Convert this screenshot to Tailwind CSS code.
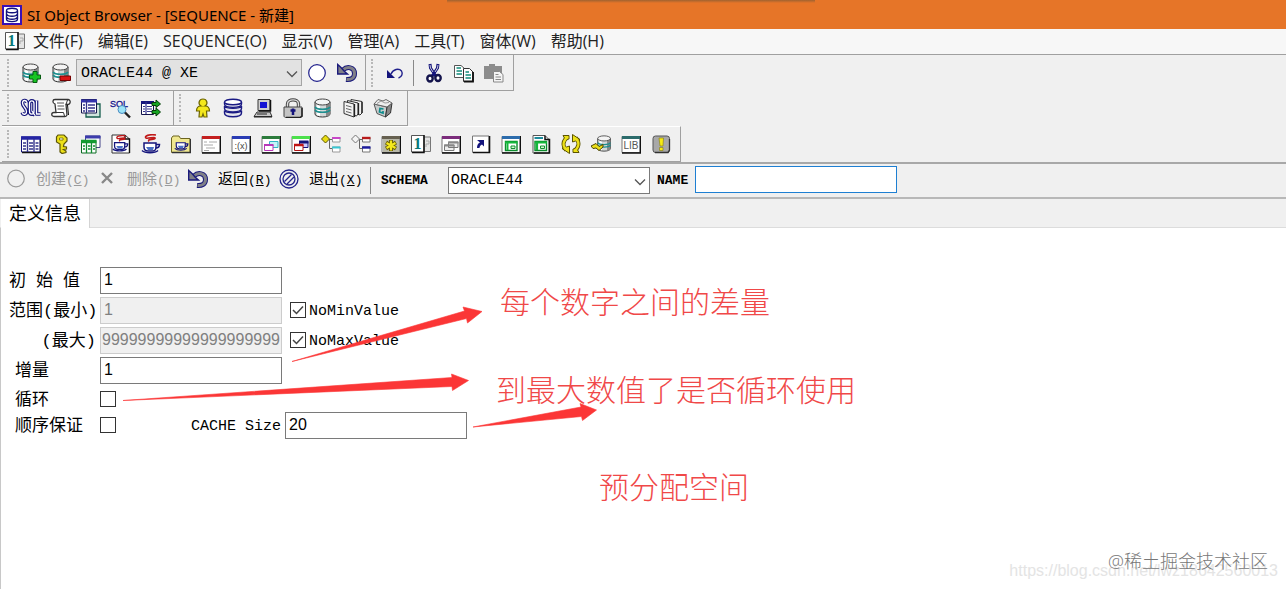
<!DOCTYPE html>
<html lang="zh-Hans">
<head>
    <meta charset="UTF-8">
    <meta name="viewport" content="width=device-width, initial-scale=1.0">
    <title>SI Object Browser - [SEQUENCE - 新建]</title>
    <script src="https://cdn.jsdelivr.net/npm/@tailwindcss/browser@4"></script>
    <style>
        body { font-family: 'Open Sans', 'Noto Sans CJK SC', sans-serif; }
        .caption { font-family: 'Noto Sans', 'Noto Sans CJK SC', sans-serif; }
        .song { font-family: 'Liberation Mono', 'Noto Sans CJK SC', monospace; }
        .digits { font-family: 'Liberation Sans', 'Noto Sans CJK SC', sans-serif; }
    </style>
</head>
<body class="min-h-screen flex flex-col bg-white text-black overflow-hidden">

    <!-- 共用图形 -->
    <svg class="hidden">
        <symbol id="win" viewBox="0 0 20 20">
            <path d="M1 2.500H19V18.500H1z" fill="#fff" stroke="#777"/>
            <path d="M19.500 2V19H1" fill="none" stroke="#111" stroke-width="1.500"/>
            <path d="M1 3.500H19" stroke="currentColor" stroke-width="3"/>
        </symbol>
        <symbol id="back" viewBox="0 0 20 20">
            <path d="M6 7C10 3 17.500 4 17.500 10.500C17.500 15 14 17 9 16.500" fill="none" stroke="#1a1a7c" stroke-width="5"/>
            <path d="M6 7C10 3 17.500 4 17.500 10.500C17.500 15 14 17 9.500 16.500" fill="none" stroke="#808088" stroke-width="3"/>
            <path d="M.7 1.500V11H10.500L7.500 8.500L4 4.500z" fill="#808088" stroke="#1a1a7c" stroke-width="1.400"/>
        </symbol>
        <symbol id="db" viewBox="0 0 20 20">
            <path d="M2 4V16C2 20 17 20 17 16V4" fill="#d4d8d8" stroke="#333"/>
            <path d="M13 6H17V16C17 17 15 18.500 13 18.500z" fill="#888"/>
            <path d="M4 7V17L7 18V8z" fill="#fff"/>
            <ellipse cx="9.500" cy="4" rx="7.500" ry="3" fill="#f4f4f4" stroke="#444"/>
            <path d="M2 9C4 12 15 12 17 9M2 12C4 15 15 15 17 12" fill="none" stroke="#1d8f8f" stroke-width="1.500"/>
        </symbol>
        <symbol id="cup" viewBox="0 0 20 20">
            <path d="M3 9H15V13C15 16 13 17 12 17H7C4 17 3 15 3 13z" fill="#fff" stroke="#15157c" stroke-width="1.500"/>
            <path d="M5 13H13L12 16H7z" fill="#4b70c4"/>
            <path d="M15 10.500H18.500C18.500 13 17 14 14.500 14M1 16.500C4 19.500 14 19.500 17 16.500" fill="none" stroke="#15157c" stroke-width="1.500"/>
        </symbol>
        <symbol id="steam" viewBox="0 0 20 20">
            <path d="M15 1C8 0 3 2 5 4C7 5 15 2 14 4.500C13 6 6 4.500 8 7.500" fill="none" stroke="#c01818" stroke-width="1.600"/>
        </symbol>
        <symbol id="book" viewBox="0 0 20 20">
            <path d="M12 3H19.500V17.500H12z" fill="#e4e4e4" stroke="#777"/>
            <path d="M15 7H18V10H15V13" fill="none" stroke="#aaa"/>
            <path d="M.5 1.500H13V18H.5z" fill="#fff" stroke="#555"/>
            <path d="M13 1V18.500H1" fill="none" stroke="#111" stroke-width="1.500"/>
            <text x="6.500" y="15" text-anchor="middle" font-family="Liberation Serif" font-weight="bold" font-size="16" fill="#087878">1</text>
        </symbol>
    </svg>

    <header class="relative flex items-center h-[29px] pl-[2px] gap-[5px] bg-[#e67528]">
        <svg class="size-5" viewBox="0 0 20 20">
            <path d="M1 1H19V19H1z" fill="#fff" stroke="#3a10b4" stroke-width="2"/>
            <path d="M4.500 6V14C4.500 17.500 15.500 17.500 15.500 14V6M4.500 9C6 12 14 12 15.500 9M4.500 12C6 15 14 15 15.500 12" fill="none" stroke="#14147c" stroke-width="1.400"/>
            <ellipse cx="10" cy="5.500" rx="5.500" ry="2.200" fill="#fff" stroke="#14147c" stroke-width="1.400"/>
        </svg>
        <h1 class="caption text-[15px] leading-5">SI Object Browser - [SEQUENCE - 新建]</h1>
        <div class="absolute left-[447px] top-0 w-[368px] h-[3px] bg-linear-to-b from-[#a0622f] to-[#e67528]"></div>
    </header>

    <nav class="flex items-center h-[26px] pl-[5px] pb-[2px] bg-[#f7f7f7] border-b border-[#a0a0a0] text-base leading-5 text-[#222]">
        <svg class="size-5 mr-2"><use href="#book"/></svg>
        <div class="flex gap-[15px]">
            <button>文件(F)</button>
            <button>编辑(E)</button>
            <button>SEQUENCE(O)</button>
            <button>显示(V)</button>
            <button>管理(A)</button>
            <button>工具(T)</button>
            <button>窗体(W)</button>
            <button>帮助(H)</button>
        </div>
    </nav>

    <div class="bg-[#f0f0f0] border-b-2 border-[#a8a8a8] pl-[2px]">
        <!-- 第一行 -->
        <div class="flex h-9">
            <div class="flex items-center border-r border-b border-[#a0a0a0] w-[364px] pl-[5px]">
                <div class="h-7 w-[9px] border-l-2 border-dotted border-[#b8b8b8]"></div>
                <button class="w-[30px] grid place-items-center" aria-label="连接">
                    <svg class="size-5" viewBox="0 0 20 20"><use href="#db"/><path d="M12 8.500H16V12H19.500V16H16V19.500H12V16H8.500V12H12z" fill="#16c422" stroke="#065c10"/></svg>
                </button>
                <button class="w-[30px] grid place-items-center" aria-label="断开">
                    <svg class="size-5" viewBox="0 0 20 20"><use href="#db"/><path d="M9 13H19.500V17.500H9z" fill="#d81414" stroke="#700"/></svg>
                </button>
                <div class="relative">
                    <select aria-label="数据库" class="song appearance-none block w-[226px] h-[27px] pl-1 pt-[3px] bg-[#e2e2e2] border border-[#a5a5a5] text-[15px]"><option>ORACLE44 @ XE</option></select>
                    <svg class="absolute right-1 top-[11px] w-3 h-2 pointer-events-none" viewBox="0 0 12 8"><path d="M1 1.500L6 6.500L11 1.500" fill="none" stroke="#555" stroke-width="1.300"/></svg>
                </div>
                <button class="w-[30px] grid place-items-center" aria-label="执行">
                    <svg class="size-5" viewBox="0 0 20 20"><circle cx="10" cy="10" r="8.300" fill="#fff" stroke="#20208c" stroke-width="1.200"/></svg>
                </button>
                <button class="w-[30px] grid place-items-center" aria-label="返回"><svg class="size-5"><use href="#back"/></svg></button>
            </div>
            <div class="flex items-center border-r border-b border-[#a0a0a0] w-[148px] pl-[5px]">
                <div class="h-7 w-[9px] border-l-2 border-dotted border-[#b8b8b8]"></div>
                <button class="w-[30px] grid place-items-center" aria-label="撤销">
                    <svg class="size-5" viewBox="0 0 20 20"><path d="M6 11C8 6 14 5 16.500 8C18 10.500 17 14 13.500 15" fill="none" stroke="#20208c" stroke-width="1.400"/><path d="M2 7V15H10z" fill="#14147c"/></svg>
                </button>
                <div class="w-px h-[26px] bg-[#888] ml-[3px] mr-[5px]"></div>
                <button class="w-[30px] grid place-items-center" aria-label="剪切">
                    <svg class="size-5" viewBox="0 0 20 20"><path d="M6 1L6.500 5L12.500 14M14 1L13.500 5L7.500 14" fill="none" stroke="#14147c" stroke-width="3"/><path d="M6 2L6.500 5L9 9M14 2L13.500 5L11 9" fill="none" stroke="#ccd" stroke-width="1"/><ellipse cx="6" cy="15.500" rx="2.700" ry="3" fill="#fff" stroke="#14144c" stroke-width="2.400"/><ellipse cx="14" cy="15" rx="2.700" ry="3" fill="#fff" stroke="#14144c" stroke-width="2.400"/></svg>
                </button>
                <button class="w-[30px] grid place-items-center" aria-label="复制">
                    <svg class="size-5" viewBox="0 0 20 20"><path d="M.5 2.500H7L10.500 5.500V14.500H.5z" fill="#fff" stroke="#555"/><path d="M2.500 5H7M2.500 8H8M2.500 11H8" stroke="#128a7a" stroke-width="1.400"/><path d="M9.500 5.500H15.500L19 9V18.500H9.500z" fill="#fff" stroke="#333"/><path d="M19 9V18.500H10" fill="none" stroke="#111" stroke-width="1.800"/><path d="M11.500 9H15M11.500 12H17M11.500 15H17" stroke="#128a7a" stroke-width="1.400"/></svg>
                </button>
                <button class="w-[30px] grid place-items-center" aria-label="粘贴">
                    <svg class="size-5" viewBox="0 0 20 20"><path d="M0 3H5V1H11V3H18V16H0z" fill="#8c8c8c"/><path d="M9.500 8.500H15.500L19 11.500V19H9.500z" fill="#f4f4f4" stroke="#888"/><path d="M11.500 11.500H14.500M11.500 14H17M11.500 16.500H17" stroke="#888"/></svg>
                </button>
            </div>
        </div>

        <!-- 第二行 -->
        <div class="flex h-[35px]">
            <div class="flex items-center border-r border-b border-[#a0a0a0] w-[172px] pl-[5px]">
                <div class="h-7 w-[9px] border-l-2 border-dotted border-[#b8b8b8]"></div>
                <button class="w-[30px] grid place-items-center" aria-label="SQL">
                    <svg class="size-5 overflow-visible" viewBox="0 0 20 20"><g fill="none" stroke-linejoin="round"><path d="M6 4.500C5 1.500 1.500 2 1.500 5C1.500 9 5.500 9.500 5.500 13.500C5.500 17 2 17 1.200 14.500M8.500 5.500C8.500 2 13 2 13 5.500V13.500C13 17 8.500 17 8.500 13.500zM11 13L14 17.500M15.500 2.500V16H19.500" stroke="#14147c" stroke-width="3.600"/><path d="M6 4.500C5 1.500 1.500 2 1.500 5C1.500 9 5.500 9.500 5.500 13.500C5.500 17 2 17 1.200 14.500M8.500 5.500C8.500 2 13 2 13 5.500V13.500C13 17 8.500 17 8.500 13.500zM11 13L14 17.500M15.500 2.500V16H19.500" stroke="#fff" stroke-width="1.300"/></g></svg>
                </button>
                <button class="w-[30px] grid place-items-center" aria-label="脚本">
                    <svg class="size-5" viewBox="0 0 20 20"><path d="M4 1.500H17C20 1.500 20 6.500 16.500 6.500H15L16 17C15 19 14 18.500 13 18.500H3C0 18.500 0 14.500 3 14.500H5L4 6C1 5 1.500 1.500 4 1.500z" fill="#fff" stroke="#333" stroke-width="1.300"/><path d="M15 6.500L16.500 2M5 14.500H12.500L13.500 18" fill="none" stroke="#333"/><path d="M6 5H13M6.500 8H13M6.500 11H13.500" stroke="#555"/><path d="M16.500 7L17.500 17" stroke="#111"/></svg>
                </button>
                <button class="w-[30px] grid place-items-center" aria-label="表数据">
                    <svg class="size-5" viewBox="0 0 20 20"><path d="M5 6H19V19H5z" fill="#cfe4dc" stroke="#145c4c" stroke-width="1.300"/><path d="M.5 1.500H15.500V15H.5z" fill="#fff" stroke="#14144c"/><path d="M0 3H16" stroke="#3434ac" stroke-width="3"/><path d="M5.500 2V15M2 7H4M2 10H4M2 13H4M7 7H14M7 10H14M7 13H14" stroke="#33338c" stroke-width="1.300"/></svg>
                </button>
                <button class="w-[30px] grid place-items-center" aria-label="SQL 搜索">
                    <svg class="size-5 overflow-visible" viewBox="0 0 20 20"><text x="8" y="9" text-anchor="middle" font-family="Liberation Sans" font-size="9" fill="#14148c" stroke="#14148c" stroke-width=".3">SQL</text><circle cx="11" cy="11.500" r="4" fill="#9ce4f8" stroke="#4a8ac0"/><path d="M14 14.500L19 19.500" stroke="#222" stroke-width="2.400"/></svg>
                </button>
                <button class="w-[30px] grid place-items-center" aria-label="导出">
                    <svg class="size-5" viewBox="0 0 20 20"><path d="M.5 3.500H12.500V16.500H.5z" fill="#fff" stroke="#14144c"/><path d="M0 4.500H13" stroke="#14147c" stroke-width="3"/><path d="M5 4V16M2 8.500H4M2 11H4M2 13.500H4M6 8.500H11M6 11H11M6 13.500H11" stroke="#33338c" stroke-width="1.200"/><path d="M11 4.500H15V2L19.500 6L15 9.500V7.500H11zM11 12.500H15V10L19.500 14L15 18V15.500H11z" fill="#16a422" stroke="#053c08"/></svg>
                </button>
            </div>
            <div class="flex items-center border-r border-b border-[#a0a0a0] w-[234px] pl-[5px]">
                <div class="h-7 w-[9px] border-l-2 border-dotted border-[#b8b8b8]"></div>
                <button class="w-[30px] grid place-items-center" aria-label="用户">
                    <svg class="size-5" viewBox="0 0 20 20"><path d="M8 8C4.500 6 6 1 10 1S15.500 6 12 8C15 8 16.500 9 16.500 13H13.500L14 19H11L10 16L9 19H6L6.500 13H3.500C3.500 9 5 8 8 8z" fill="#f4e81c" stroke="#6c6400" stroke-width="1.200"/></svg>
                </button>
                <button class="w-[30px] grid place-items-center" aria-label="表空间">
                    <svg class="size-5" viewBox="0 0 20 20"><g fill="#e4e4ec" stroke="#1a1a84" stroke-width="1.400"><path d="M1.500 12.500V15C1.500 20 18.500 20 18.500 15V12.500C17 15.500 3 15.500 1.500 12.500z"/><path d="M1.500 8V10.500C1.500 15 18.500 15 18.500 10.500V8C17 11 3 11 1.500 8z"/><path d="M1.500 4V6C1.500 10.500 18.500 10.500 18.500 6V4"/><ellipse cx="10" cy="4" rx="8.500" ry="2.800" fill="#fff"/></g></svg>
                </button>
                <button class="w-[30px] grid place-items-center" aria-label="会话">
                    <svg class="size-5" viewBox="0 0 20 20"><path d="M5 1.500H17V12.500H5z" fill="#d0d0d0" stroke="#333"/><path d="M17.500 2V13H6" fill="none" stroke="#111" stroke-width="1.500"/><path d="M7 4H14V10H7z" fill="#1414d4"/><path d="M4 14H17L19 18.500H1z" fill="#c8c8c8" stroke="#333"/><path d="M4 16H14M1 19H19" stroke="#222"/></svg>
                </button>
                <button class="w-[30px] grid place-items-center" aria-label="锁">
                    <svg class="size-5" viewBox="0 0 20 20"><path d="M4.500 9V6C4.500 .5 15.500 .5 15.500 6V9" fill="none" stroke="#444" stroke-width="3.400"/><path d="M4.500 9V6C4.500 .5 15.500 .5 15.500 6V9" fill="none" stroke="#ddd" stroke-width="1.400"/><path d="M1 9H19V18C19 19 18 19.500 17 19.500H3C2 19.500 1 19 1 18z" fill="#c4c4c4" stroke="#444"/><path d="M19 10V18L17 19.500H3" fill="none" stroke="#222" stroke-width="1.500"/><path d="M10 10.500V17M7.500 12.500H12.500" stroke="#14147c" stroke-width="2.500"/></svg>
                </button>
                <button class="w-[30px] grid place-items-center" aria-label="数据库"><svg class="size-5"><use href="#db"/></svg></button>
                <button class="w-[30px] grid place-items-center" aria-label="文件">
                    <svg class="size-5" viewBox="0 0 20 20"><g fill="#f4f4f4" stroke="#333"><path d="M8 1.500L19 3.500V15L17 17L8 14z"/><path d="M4.500 2.500L15 5V16L13.500 18L4.500 15z"/><path d="M1 3.500L11 6V19L1 15.500z"/></g><path d="M3 7.500L8.500 9M3 10.500L8.500 12M3 13.500L8.500 15" stroke="#666"/><path d="M11.500 6V19M15.500 5V17M19 4V15" stroke="#222" stroke-width="1.300"/></svg>
                </button>
                <button class="w-[30px] grid place-items-center" aria-label="回收站">
                    <svg class="size-5" viewBox="0 0 20 20"><path d="M1 6L14 9L12.500 19L4 15.500z" fill="#c8cccc" stroke="#555"/><path d="M14 9L19 5L17.500 15L12.500 19z" fill="#888" stroke="#333"/><path d="M1 6L5 1.500L10 3L13 1.500L19 5L14 9z" fill="#eee" stroke="#666"/><path d="M4 5.500L8 3L12 5L16 4.500" fill="none" stroke="#999"/><path d="M10.500 11L7 10.500L6.500 14L10 15V13" fill="none" stroke="#0c8c8c" stroke-width="1.700"/></svg>
                </button>
            </div>
        </div>

        <!-- 第三行 -->
        <div class="flex h-9">
            <div class="flex items-center border-r border-b border-[#a0a0a0] border-t border-t-white w-[679px] pl-[5px]">
                <div class="h-7 w-[9px] border-l-2 border-dotted border-[#b8b8b8]"></div>
                <button class="w-[30px] grid place-items-center" aria-label="表">
                    <svg class="size-5" viewBox="0 0 20 20"><path d="M.5 3H19V18H.5z" fill="#fff" stroke="#14147c"/><path d="M19.500 3V18.500H1" fill="none" stroke="#111" stroke-width="1.300"/><path d="M0 4H20" stroke="#2424a4" stroke-width="3.500"/><path d="M6.500 5V18M13 5V18M2 9H5M2 12H5M2 15H5M8 9H12M8 12H12M8 15H12M14.500 9H17.500M14.500 12H17.500M14.500 15H17.500" stroke="#33338c" stroke-width="1.400"/></svg>
                </button>
                <button class="w-[30px] grid place-items-center" aria-label="索引">
                    <svg class="size-5" viewBox="0 0 20 20"><path d="M7 1H13L16 4V7L13 10L12.500 12.500L15.500 13V15L12.500 15.500L15 17V18.500L11 19.500L9 18V10L5.500 8V3z" fill="#ece018" stroke="#5c5408" stroke-width="1.200"/><path d="M8.500 4H12V6H8.500z" fill="#fff" stroke="#6c6400" stroke-width=".8"/></svg>
                </button>
                <button class="w-[30px] grid place-items-center" aria-label="视图">
                    <svg class="size-5" viewBox="0 0 20 20"><path d="M4.500 2H19V13.500H4.500z" fill="#fff" stroke="#448"/><path d="M4 3H19.500" stroke="#3c3cac" stroke-width="3"/><path d="M.5 6.500H15V19H.5z" fill="#fff" stroke="#0c6c24"/><path d="M0 7.500H15.500" stroke="#129c30" stroke-width="3.500"/><path d="M5.500 8V19M10.500 8V19M2 12H4M2 15H4M7 12H9.500M7 15H9.500M12 12H14M12 15H14" stroke="#128c30" stroke-width="1.300"/></svg>
                </button>
                <button class="w-[30px] grid place-items-center" aria-label="Java 源">
                    <svg class="size-5" viewBox="0 0 20 20"><path d="M1 1H14L18.500 5V19H1z" fill="#fff" stroke="#333"/><path d="M14 1V5H18.500V19" fill="none" stroke="#111" stroke-width="1.400"/><use href="#cup" x="1" y="1" width="17" height="17"/><use href="#steam" x="2" y="1" width="17" height="17"/></svg>
                </button>
                <button class="w-[30px] grid place-items-center" aria-label="Java 类">
                    <svg class="size-5" viewBox="0 0 20 20"><use href="#cup"/><use href="#steam"/></svg>
                </button>
                <button class="w-[30px] grid place-items-center" aria-label="Java 资源">
                    <svg class="size-5" viewBox="0 0 20 20"><path d="M.5 4L2 2H8L9.500 4.500H19V18.500H.5z" fill="#f0e890" stroke="#6c6420"/><path d="M19.500 5V18.500H1" fill="none" stroke="#333" stroke-width="1.400"/><use href="#cup" x="3" y="2" width="15" height="15"/></svg>
                </button>
                <button class="w-[30px] grid place-items-center" aria-label="过程">
                    <svg class="size-5" viewBox="0 0 20 20"><use href="#win" class="text-[#c42020]"/><path d="M3 8H6M8 8H16M3 11H12M5 14H14M3 16.500H8" stroke="#aaa"/></svg>
                </button>
                <button class="w-[30px] grid place-items-center" aria-label="函数">
                    <svg class="size-5" viewBox="0 0 20 20"><use href="#win" class="text-[#2a3cb4]"/><text x="10" y="15" text-anchor="middle" font-family="Liberation Sans" font-size="9" fill="#444">:(x)</text></svg>
                </button>
                <button class="w-[30px] grid place-items-center" aria-label="包">
                    <svg class="size-5" viewBox="0 0 20 20"><use href="#win" class="text-[#2c7c3c]"/><path d="M8.500 7.500H17V13.500H8.500z" fill="#c4f4f8" stroke="#30b8c4"/><path d="M3.500 11H12V16.500H3.500z" fill="#fff" stroke="#b838b8"/><path d="M3 11H12.500" stroke="#b838b8" stroke-width="2"/></svg>
                </button>
                <button class="w-[30px] grid place-items-center" aria-label="包体">
                    <svg class="size-5" viewBox="0 0 20 20"><use href="#win" class="text-[#4ce04c]"/><path d="M8.500 7.500H17V13.500H8.500z" fill="#ccf" stroke="#14147c"/><path d="M8 8H17.500" stroke="#14147c" stroke-width="3"/><path d="M3.500 11H12V16.500H3.500z" fill="#fff" stroke="#b01414"/><path d="M3 11H12.500" stroke="#c01414" stroke-width="2.500"/></svg>
                </button>
                <button class="w-[30px] grid place-items-center" aria-label="类型">
                    <svg class="size-5" viewBox="0 0 20 20"><path d="M8 5.500H11M8.500 6V14.500H11" fill="none" stroke="#666"/><path d="M4.500 1L8.500 5L4.500 9L.5 5z" fill="#e8dc10" stroke="#5c5400"/><path d="M11.500 3.500H19V8H11.500zM11.500 13H19V18H11.500z" fill="#fff" stroke="#999"/><path d="M11 4H19.500" stroke="#c848c8" stroke-width="2"/><path d="M11 13.500H19.500" stroke="#38c8d4" stroke-width="2"/></svg>
                </button>
                <button class="w-[30px] grid place-items-center" aria-label="类型体">
                    <svg class="size-5" viewBox="0 0 20 20"><path d="M8 5.500H11M8.500 6V14.500H11" fill="none" stroke="#666"/><path d="M4.500 1L8.500 5L4.500 9L.5 5z" fill="#f4f4f4" stroke="#777"/><path d="M11.500 3.500H19V8H11.500zM11.500 13H19V18H11.500z" fill="#fff" stroke="#777"/><path d="M11 4H19.500" stroke="#b81c1c" stroke-width="2.400"/><path d="M11 13.500H19.500" stroke="#1c1ca0" stroke-width="2.400"/></svg>
                </button>
                <button class="w-[30px] grid place-items-center" aria-label="触发器">
                    <svg class="size-5" viewBox="0 0 20 20"><use href="#win" class="text-[#666050]"/><path d="M2 5H18V18H2z" fill="#b8b8a8"/><path d="M10 6V17M5 8.500L15 14.500M15 8.500L5 14.500" stroke="#665c00" stroke-width="4"/><path d="M10 6.500V16.500M5.500 9L14.500 14M14.500 9L5.500 14" stroke="#f4e81c" stroke-width="2.200"/></svg>
                </button>
                <button class="w-[30px] grid place-items-center" aria-label="序列"><svg class="size-5"><use href="#book"/></svg></button>
                <button class="w-[30px] grid place-items-center" aria-label="同义词">
                    <svg class="size-5" viewBox="0 0 20 20"><use href="#win" class="text-[#7c2c7c]"/><path d="M7.500 8H17V13.500H7.500zM3.500 11H13V16.500H3.500z" fill="#eee" stroke="#777"/><path d="M7 8.500H17.500M3 11.500H13.500" stroke="#888" stroke-width="2"/></svg>
                </button>
                <button class="w-[30px] grid place-items-center" aria-label="链接">
                    <svg class="size-5" viewBox="0 0 20 20"><path d="M1.500 2H18V18.500H1.500z" fill="#fff" stroke="#777"/><path d="M18.500 2V18.500H2" fill="none" stroke="#111" stroke-width="1.600"/><path d="M6 6H13V12.500L11 10.500C9 11.500 8.500 13 8.500 14H6C6 11 7 9.500 9 8.500z" fill="#14147c"/></svg>
                </button>
                <button class="w-[30px] grid place-items-center" aria-label="物化视图">
                    <svg class="size-5" viewBox="0 0 20 20"><use href="#win" class="text-[#2c6cac]"/><path d="M4.500 7.500H16V16.500H4.500z" fill="#fff" stroke="#0c8c2c" stroke-width="1.400"/><path d="M4 8.500H16.500" stroke="#14b83c" stroke-width="2"/><path d="M6.500 9V16" stroke="#14b83c" stroke-width="2"/><path d="M10 12H14V14.500H10z" fill="#cfc" stroke="#128c30"/></svg>
                </button>
                <button class="w-[30px] grid place-items-center" aria-label="物化视图日志">
                    <svg class="size-5" viewBox="0 0 20 20"><path d="M2 1.500H14L18 5.500V19H2z" fill="#fff" stroke="#555"/><path d="M14 1.500V5.500H18.500V19H3" fill="none" stroke="#111" stroke-width="1.500"/><path d="M3.500 4H12" stroke="#1c8c9c" stroke-width="2"/><path d="M4 7.500H15.500V16.500H4z" fill="#fff" stroke="#0c8c2c" stroke-width="1.400"/><path d="M4 8.500H16M6 8V16" stroke="#14b83c" stroke-width="2.200"/><path d="M9.500 12H13.500V14.500H9.500z" fill="#cfc" stroke="#128c30"/></svg>
                </button>
                <button class="w-[30px] grid place-items-center" aria-label="刷新">
                    <svg class="size-5" viewBox="0 0 20 20"><g fill="none" stroke="#5c5400" stroke-width="4"><path d="M7 3C2 6 1 12 5 16"/><path d="M13 17C18 14 19 8 15 4"/></g><g fill="#ece018" stroke="#5c5400"><path d="M1 14.500L8.500 19.500V12z"/><path d="M19 5.500L11.500 .5V8z"/><path d="M2 1.500H8V5H4z"/><path d="M18 18.500H12V15H16z"/></g><g fill="none" stroke="#ece018" stroke-width="2.200"><path d="M7 3C2 6 1 12 5 15"/><path d="M13 17C18 14 19 8 15 5"/></g></svg>
                </button>
                <button class="w-[30px] grid place-items-center" aria-label="数据库链接">
                    <svg class="size-5" viewBox="0 0 20 20"><use href="#db" x="5" y="1" width="17" height="17"/><path d="M0 12L5 9.500L8 12.500L12 10.500V13L8 16.500L5 14L2 14.500z" fill="#ece018" stroke="#4c4600"/></svg>
                </button>
                <button class="w-[30px] grid place-items-center" aria-label="库">
                    <svg class="size-5" viewBox="0 0 20 20"><use href="#win" class="text-[#2c6c6c]"/><text x="10" y="15" text-anchor="middle" font-family="Liberation Sans" font-size="10" fill="#555">LIB</text></svg>
                </button>
                <button class="w-[30px] grid place-items-center" aria-label="提示">
                    <svg class="size-5" viewBox="0 0 20 20"><rect x="2" y="2" width="16.500" height="16.500" rx="2.500" fill="#a8a8a8" stroke="#555"/><path d="M18.500 5V16L17 18.500H4" fill="none" stroke="#333" stroke-width="1.300"/><path d="M8 4H12.500L12 12H9zM8.500 13.500H12V16.500H8.500z" fill="#f8ec10" stroke="#8c8420" stroke-width=".7"/></svg>
                </button>
            </div>
        </div>
    </div>

    <!-- 命令栏 -->
    <div class="song flex items-center h-[35px] pl-[6px] bg-[#f0f0f0] border-b-2 border-[#b8b8b8] text-[15px] leading-5">
        <button disabled class="w-[91px] flex items-center gap-[10px] whitespace-nowrap text-[#9a9a9a]">
            <svg class="size-5 mb-1" viewBox="0 0 20 20"><circle cx="10" cy="9.500" r="8.300" fill="none" stroke="#999" stroke-width="1.200"/></svg>
            <span>创建<span class="text-[13px]">(<u>C</u>)</span></span>
        </button>
        <button disabled class="w-[91px] flex items-center gap-[10px] whitespace-nowrap text-[#9a9a9a]">
            <svg class="size-5 mb-1" viewBox="0 0 20 20"><path d="M5 4L15 14M15 4L5 14" stroke="#888" stroke-width="2.400"/></svg>
            <span>删除<span class="text-[13px]">(<u>D</u>)</span></span>
        </button>
        <button class="w-[91px] flex items-center gap-[10px] whitespace-nowrap">
            <svg class="size-5 mb-1"><use href="#back"/></svg>
            <span>返回<span class="text-[13px]">(<u>R</u>)</span></span>
        </button>
        <button class="w-[91px] flex items-center gap-[10px] whitespace-nowrap">
            <svg class="size-5 mb-1" viewBox="0 0 20 20"><g fill="none" stroke="#24248c" stroke-width="1.300"><circle cx="10" cy="10" r="9"/><circle cx="10" cy="10" r="6"/><path d="M5.500 12.500L12.500 5.500M8 15L15 8"/></g></svg>
            <span>退出<span class="text-[13px]">(<u>X</u>)</span></span>
        </button>
        <div class="w-px h-[27px] bg-[#888] mr-[10px]"></div>
        <label for="schema" class="w-[67px] text-[13px] font-bold">SCHEMA</label>
        <div class="relative">
            <select id="schema" class="appearance-none block w-[202px] h-[27px] pl-[2px] bg-white border border-[#7a7a7a]"><option>ORACLE44</option></select>
            <svg class="absolute right-1 top-[11px] w-3 h-2 pointer-events-none" viewBox="0 0 12 8"><path d="M1 1.500L6 6.500L11 1.500" fill="none" stroke="#555" stroke-width="1.300"/></svg>
        </div>
        <label for="name" class="ml-[7px] w-[38px] text-[13px] font-bold">NAME</label>
        <input id="name" type="text" class="w-[202px] h-[27px] mb-[2px] px-1 bg-white border border-[#1e7fd2] outline-none">
    </div>

    <div class="flex h-[29px] bg-[#f0f0f0] border-b border-[#dcdcdc] pl-px">
        <button class="h-[29px] w-[89px] pl-2 pb-[2px] bg-white border-r border-[#d4d4d4] text-left text-lg leading-6">定义信息</button>
    </div>

    <main class="relative grow border-l border-[#c8c8c8] pt-[37px] pl-2">
        <form class="song text-[17px] leading-5">
            <div class="flex items-center h-[30px]">
                <label for="start" class="w-[91px] pt-1 flex gap-[10px]"><span>初</span><span>始</span><span>值</span></label>
                <input id="start" type="text" value="1" class="digits w-[182px] h-[27px] px-[3px] border border-[#7a7a7a] text-base">
            </div>
            <div class="flex items-center h-[30px]">
                <label for="min" class="w-[91px] pt-1 whitespace-nowrap">范围(最小)</label>
                <input id="min" type="text" value="1" disabled class="digits w-[182px] h-[27px] px-[3px] bg-[#f0f0f0] border border-[#ccc] text-base text-[#808080]">
                <label class="ml-2 flex items-center gap-[3px] text-[15px]">
                    <span class="grid place-items-center">
                        <input type="checkbox" checked class="appearance-none size-4 bg-white border border-[#333] col-start-1 row-start-1">
                        <svg class="size-3 col-start-1 row-start-1 pointer-events-none" viewBox="0 0 12 12"><path d="M1 6L4.500 9.500L11 2.500" fill="none" stroke="#444" stroke-width="1.500"/></svg>
                    </span>
                    <span class="pt-1">NoMinValue</span>
                </label>
            </div>
            <div class="flex items-center h-[30px]">
                <label for="max" class="w-[91px] pt-1 pr-1 text-right">(最大)</label>
                <input id="max" type="text" value="99999999999999999999" disabled class="digits w-[182px] h-[27px] px-px bg-[#f0f0f0] border border-[#ccc] text-base text-[#808080]">
                <label class="ml-2 flex items-center gap-[3px] text-[15px]">
                    <span class="grid place-items-center">
                        <input type="checkbox" checked class="appearance-none size-4 bg-white border border-[#333] col-start-1 row-start-1">
                        <svg class="size-3 col-start-1 row-start-1 pointer-events-none" viewBox="0 0 12 12"><path d="M1 6L4.500 9.500L11 2.500" fill="none" stroke="#444" stroke-width="1.500"/></svg>
                    </span>
                    <span class="pt-1">NoMaxValue</span>
                </label>
            </div>
            <div class="flex items-center h-[30px]">
                <label for="step" class="w-[91px] pt-1 pl-[6px]">增量</label>
                <input id="step" type="text" value="1" class="digits w-[182px] h-[27px] px-[3px] border border-[#7a7a7a] text-base">
            </div>
            <div class="flex items-center h-7">
                <label for="cycle" class="w-[91px] pt-1 pl-[6px]">循环</label>
                <input id="cycle" type="checkbox" class="appearance-none size-4 bg-white border border-[#333]">
            </div>
            <div class="flex items-center h-6">
                <label for="order" class="w-[91px] pt-1 pl-[6px]">顺序保证</label>
                <input id="order" type="checkbox" class="appearance-none size-4 bg-white border border-[#333]">
                <label for="cache" class="ml-[75px] w-[94px] pt-1 text-[15px]">CACHE Size</label>
                <input id="cache" type="text" value="20" class="digits w-[182px] h-[27px] px-[3px] border border-[#7a7a7a] text-base">
            </div>
        </form>

        <!-- 批注箭头 -->
        <svg class="absolute left-0 top-0 w-[620px] h-[220px] pointer-events-none" viewBox="1 228 620 220" fill="#fb3636">
            <path d="M292 361.500L464.500 311L463 307L482 311.500L467.500 323L466.500 318.500z" stroke="#fb3636" stroke-width=".6"/>
            <path d="M123 400.500L452 377.500L451.500 374L468.500 380.500L452.500 390.500L452 386.500z" stroke="#fb3636" stroke-width=".6"/>
            <path d="M473 427L581 407L580 403.500L596.500 410L582.500 420.500L581.500 416.500z" stroke="#fb3636" stroke-width=".6"/>
        </svg>
        <p class="absolute left-[499px] top-[54px] text-[30px] leading-10 font-light text-[#f04848]">每个数字之间的差量</p>
        <p class="absolute left-[495px] top-[142px] text-[30px] leading-10 font-light text-[#f04848]">到最大数值了是否循环使用</p>
        <p class="absolute left-[598px] top-[239px] text-[30px] leading-10 font-light text-[#f04848]">预分配空间</p>

        <p class="digits absolute right-2 bottom-[8px] text-base leading-5 text-[#e4e4e4]">https://blog.csdn.net/lwz18642560013</p>
        <p class="absolute right-[18px] bottom-[16px] text-lg leading-6 font-light text-[#777]">@稀土掘金技术社区</p>
    </main>

</body>
</html>
